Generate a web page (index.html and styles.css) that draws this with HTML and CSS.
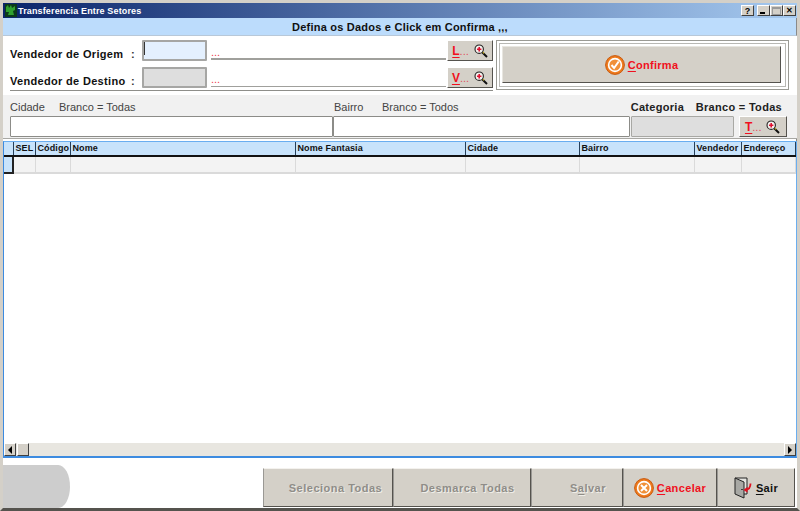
FILE: index.html
```html
<!DOCTYPE html>
<html lang="pt">
<head>
<meta charset="utf-8">
<title>Transferencia Entre Setores</title>
<link rel="stylesheet" href="styles.css">
</head>
<body>
<svg class="defs" width="0" height="0" aria-hidden="true">
  <symbol id="lens" viewBox="0 0 14 14">
    <path d="M8.2 8.2L13 13" stroke="#111" stroke-width="2" fill="none"/>
    <path d="M8.8 8.2l1.2 1.2" stroke="#d8c020" stroke-width="1.2" fill="none"/>
    <circle cx="5.2" cy="5.2" r="4.2" fill="#f4f0ec" stroke="#222" stroke-width="1.1"/>
    <path d="M5.2 3v4.4M3 5.2h4.4" stroke="#e01030" stroke-width="1.6"/>
  </symbol>
</svg>
<div class="window">
  <header class="titlebar">
    <svg class="appicon" width="12" height="13" viewBox="0 0 12 13"><rect width="12" height="13" fill="#0b3a1a"/><path d="M1 3l2-2 1 3 2-3 1 3 3-2 0 4-2 1 1 4H3L4 8 1 8z" fill="#2fa02f"/></svg>
    <span class="titletext">Transferencia Entre Setores</span>
    <div class="winbtns">
      <button class="winbtn help">?</button>
      <button class="winbtn min"><i></i></button>
      <button class="winbtn max"><i></i></button>
      <button class="winbtn close">✕</button>
    </div>
  </header>
  <div class="band">Defina os Dados e Click em Confirma ,,,</div>
  <section class="top">
    <div class="vendors">
      <div class="vrow">
        <label class="vlabel">Vendedor de Origem</label><span class="colon">:</span>
        <div class="field active"><i class="caret"></i></div>
        <div class="dots">...</div>
        <button class="lookup"><span class="lk"><u>L</u><span class="lkdots">...</span></span><svg width="14" height="14"><use href="#lens"/></svg></button>
      </div>
      <div class="vrow">
        <label class="vlabel">Vendedor de Destino</label><span class="colon">:</span>
        <div class="field off"></div>
        <div class="dots">...</div>
        <button class="lookup"><span class="lk"><u>V</u><span class="lkdots">...</span></span><svg width="14" height="14"><use href="#lens"/></svg></button>
      </div>
    </div>
    <div class="confirmbox">
      <button class="confirm">
        <svg width="20" height="20" viewBox="0 0 20 20"><circle cx="10" cy="10" r="9.4" fill="#ee7a1c" stroke="#c85a10"/><circle cx="10" cy="10" r="6.4" fill="#f09038" stroke="#fff" stroke-width="1.6"/><path d="M6.5 10l2.6 3 4.6-6.5" fill="none" stroke="#fff" stroke-width="2"/></svg>
        <span><u>C</u>onfirma</span>
      </button>
    </div>
  </section>
  <section class="filters">
    <div class="fcol city">
      <div class="flabel"><span class="fname">Cidade</span><span>Branco = Todas</span></div>
      <div class="finput"></div>
    </div>
    <div class="fcol hood">
      <div class="flabel"><span class="fname">Bairro</span><span>Branco = Todos</span></div>
      <div class="finput"></div>
    </div>
    <div class="fcol cat">
      <div class="flabel strong"><span>Categoria</span><span>Branco = Todas</span></div>
      <div class="catrow">
        <div class="finput off"></div>
        <button class="lookup tall"><span class="lk"><u>T</u><span class="lkdots">...</span></span><svg width="14" height="14"><use href="#lens"/></svg></button>
      </div>
    </div>
  </section>
  <section class="table">
    <div class="thead">
      <div class="ind"></div><div>SEL</div><div>Código</div><div>Nome</div><div>Nome Fantasia</div><div>Cidade</div><div>Bairro</div><div>Vendedor</div><div>Endereço</div>
    </div>
    <div class="trow">
      <div class="ind"></div><div></div><div></div><div></div><div></div><div></div><div></div><div></div><div></div>
    </div>
    <div class="tbody"></div>
    <div class="hscroll">
      <button class="sbtn"><i class="tri left"></i></button>
      <div class="thumb"></div>
      <div class="track"></div>
      <button class="sbtn"><i class="tri right"></i></button>
    </div>
  </section>
  <footer class="footer">
    <div class="blob"></div>
    <div class="actions">
      <button class="act sel" disabled><span>Seleciona Todas</span></button>
      <button class="act des" disabled><span>Desmarca Todas</span></button>
      <button class="act sal" disabled><span>S<u>a</u>lvar</span></button>
      <button class="act can">
        <svg width="20" height="20" viewBox="0 0 20 20"><circle cx="10" cy="10" r="9.4" fill="#ee7a1c" stroke="#c85a10"/><circle cx="10" cy="10" r="6.4" fill="#f09038" stroke="#fff" stroke-width="1.6"/><path d="M7 7l6 6M13 7l-6 6" stroke="#fff" stroke-width="2"/></svg>
        <span><u>C</u>ancelar</span>
      </button>
      <button class="act out">
        <svg width="18" height="22" viewBox="0 0 18 22"><path d="M1 1h12v16h-3" fill="#e4e4e0" stroke="#222"/><path d="M1 1l9 4v16l-9-4z" fill="#a8a8a4" stroke="#222"/><path d="M8 12v1" stroke="#111" stroke-width="1.4"/><path d="M16.5 6.5c0 4-1.5 6-5 6.5" fill="none" stroke="#e01020" stroke-width="1.8"/><path d="M9.5 13l4-3.2v6z" fill="#e01020"/></svg>
        <span><u>S</u>air</span>
      </button>
    </div>
  </footer>
</div>
</body>
</html>
```
FILE: styles.css
```css
* { box-sizing: border-box; }
html, body { margin: 0; padding: 0; }
body { width: 800px; height: 511px; overflow: hidden; font-family: "Liberation Sans", Arial, sans-serif; font-size: 11px; }
.defs { position: absolute; }
button { font-family: inherit; padding: 0; margin: 0; }
u { text-decoration-thickness: 1px; text-underline-offset: 2px; }

.window { width: 800px; height: 511px; display: flex; flex-direction: column; background: #fff; border: 3px solid #d4d0c8; border-bottom: 3px solid #55534e; box-shadow: inset -1px 0 0 #8a8a86; }

.titlebar { height: 15px; display: flex; align-items: center; padding-left: 2px; background: linear-gradient(90deg, #0a246a, #a6caf0); color: #fff; font-size: 9px; font-weight: bold; flex: none; }
.appicon { margin-right: 1px; }
.titletext { letter-spacing: .14px; }
.winbtns { margin-left: auto; display: flex; margin-right: 1px; }
.winbtn { width: 13px; height: 11px; background: #d4d0c8; border: 1px solid; border-color: #fff #404040 #404040 #fff; color: #000; font-size: 9px; font-weight: bold; line-height: 8px; display: flex; align-items: center; justify-content: center; }
.help { margin-right: 3px; }
.min i { width: 5px; height: 2px; background: #000; margin-top: 5px; margin-right: 2px; }
.max i { width: 9px; height: 8px; border: 1px solid #9a9a9a; border-top-width: 2px; }
.close { font-size: 8px; }

.band { height: 18px; flex: none; background: #bcdcfc; border-bottom: 1px solid #b8c8d8; text-align: center; font-weight: bold; font-size: 11px; line-height: 18px; letter-spacing: .22px; color: #101010; padding-left: 1px; border-right: 1px solid #8a8a8a; }

.top { height: 59px; flex: none; display: flex; padding: 4px 8px 0 7px; background: #fff; }
.vendors { width: 483px; display: flex; flex-direction: column; gap: 6px; border-bottom: 1px solid #8e8e8a; height: 51px; }
.vrow { height: 21px; display: flex; align-items: stretch; }
.vlabel { width: 121px; font-weight: bold; font-size: 11px; letter-spacing: .32px; line-height: 28px; color: #111; white-space: nowrap; }
.colon { width: 11px; font-weight: bold; line-height: 28px; color: #333; }
.field { width: 65px; border: 2px solid #a6a6a4; border-radius: 1px; background: #e4f0fe; }
.field.off { background: #dedede; }
.caret { display: block; width: 1px; height: 13px; margin: 0; background: #333; }
.dots { width: 235px; margin-left: 4px; margin-right: 1px; height: 20px; border-bottom: 2px solid #a0a09c; color: #f04050; font-size: 11px; line-height: 24px; overflow: hidden; }
.vrow:last-child .dots { border-bottom-width: 1px; }
.lookup { width: 46px; height: 21px; background: #d4d0c8; border: 1px solid; border-color: #fff #55534e #55534e #fff; color: #f01020; font-weight: bold; font-size: 12px; display: flex; align-items: center; justify-content: center; gap: 5px; letter-spacing: 0; }
.lk { white-space: nowrap; }
.lkdots { font-weight: normal; font-size: 11px; color: #e05060; }

.confirmbox { width: 293px; height: 50px; margin-left: 3px; border: 1px solid #9a9a94; padding: 5px 7px 3px 5px; outline: 1px solid #b8b8b4; outline-offset: -4px; }
.confirm { width: 279px; height: 37px; background: #d4d0c8; border: 1px solid; border-color: #e8e6e0 #55534e #55534e #e8e6e0; display: flex; align-items: center; justify-content: center; gap: 3px; color: #f01020; font-weight: bold; font-size: 11px; letter-spacing: .3px; }

.filters { height: 44px; margin-bottom: 2px; flex: none; display: flex; background: #f1f1f1; padding: 5px 9px 0 7px; border-bottom: 1px solid #a8a8a4; }
.fcol { display: flex; flex-direction: column; }
.city { width: 324px; }
.hood { width: 299px; }
.cat { width: 158px; }
.flabel { height: 16px; display: flex; font-size: 11px; color: #444; line-height: 14px; }
.fname { width: 49px; }
.hood .fname { width: 48px; margin-left: 1px; }
.flabel.strong { justify-content: space-between; font-weight: bold; color: #222; letter-spacing: .3px; padding-right: 6px; white-space: nowrap; }
.finput { height: 21px; width: 323px; background: #fff; border: 1px solid #8c8c88; border-radius: 1px; }
.hood .finput { width: 297px; }
.catrow { display: flex; }
.finput.off { width: 103px; background: #dedede; border-color: #a8a8a4; }
.lookup.tall { margin-left: 5px; width: 48px; }

.table { flex: 1; min-height: 0; display: flex; flex-direction: column; background: #fff; border: 1px solid #3d8be0; border-top: 1px solid #6aaef0; border-right-color: #6aaef0; border-bottom-width: 2px; }
.thead, .trow { display: grid; grid-template-columns: 10px 22px 35px 225px 170px 114px 115px 47px 1fr; flex: none; }
.thead { height: 15px; background: #c8e3fb; border-bottom: 2px solid #111; font-weight: bold; font-size: 9px; color: #111; letter-spacing: .1px; }
.thead div { border-right: 1px solid #27405a; padding-left: 1.5px; line-height: 13px; white-space: nowrap; overflow: hidden; }
.thead .ind { padding: 0; }
.trow { height: 17px; background: #f3f3f3; border-bottom: 2px solid #dadada; }
.trow div { border-right: 1px solid #dadada; }
.trow .ind { background: #c8e3fb; border-right: 2px solid #222; border-bottom: 2px solid #222; height: 17px; }
.tbody { flex: 1; min-height: 0; background: #fff; }
.hscroll { height: 13px; flex: none; display: flex; background: #e8e6e0; }
.track { flex: 1; }
.sbtn { width: 12px; height: 13px; background: #d4d0c8; border: 1px solid; border-color: #fff #404040 #404040 #fff; display: flex; align-items: center; justify-content: center; }
.thumb { width: 12px; height: 13px; margin-left: 1px; background: #d4d0c8; border: 1px solid; border-color: #fff #404040 #404040 #fff; }
.tri { width: 0; height: 0; border-style: solid; border-color: transparent; }
.tri.left { border-width: 4px 4px 4px 0; border-right-color: #000; }
.tri.right { border-width: 4px 0 4px 4px; border-left-color: #000; }

.footer { height: 50px; flex: none; display: flex; justify-content: space-between; align-items: flex-end; background: #fff; padding-right: 2px; }
.blob { width: 67px; height: 43px; background: #cdcdcd; border-radius: 0 12px 12px 0 / 0 22px 22px 0; }
.actions { display: flex; height: 39px; margin-bottom: 1px; }
.act { height: 39px; background: #d4d0c8; border: 1px solid; border-color: #f4f2ee #55534e #55534e #9a9894; font-weight: bold; font-size: 11px; letter-spacing: .35px; display: flex; align-items: center; justify-content: center; gap: 3px; color: #f01020; }
.act:disabled { color: #8f8d88; text-shadow: 1px 1px 0 #f0eee8; letter-spacing: .5px; }
.sel { width: 130px; padding-left: 15px; }
.des { width: 138px; padding-left: 11px; }
.sal { width: 92px; padding-left: 22px; }
.can { width: 94px; }
.out { width: 78px; color: #111; gap: 4px; }
```
